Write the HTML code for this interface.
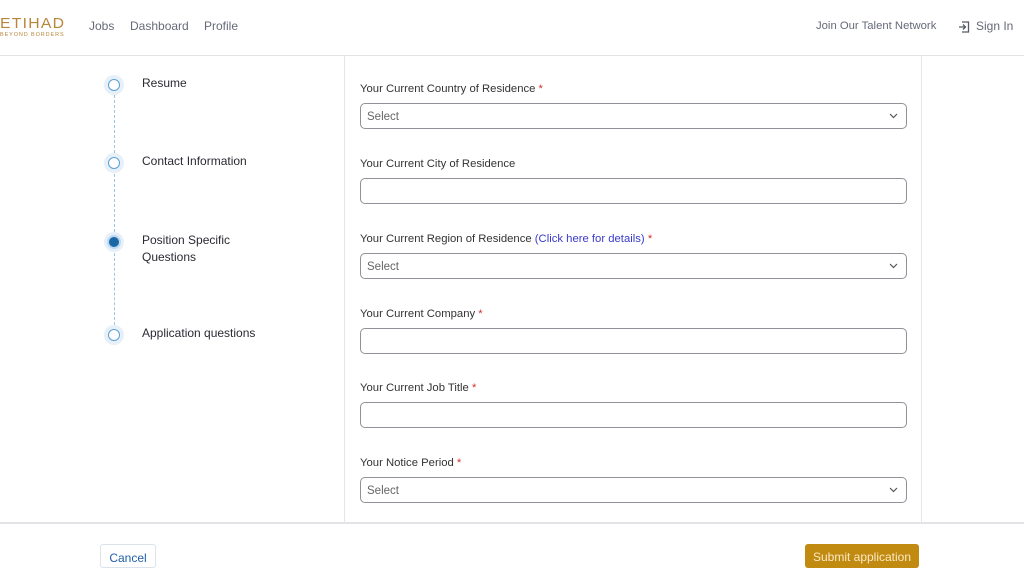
<!DOCTYPE html>
<html><head><meta charset="utf-8"><style>
*{box-sizing:border-box;margin:0;padding:0}
body{width:1024px;height:560px;overflow:hidden;background:#fff;font-family:"Liberation Sans",sans-serif;color:#333;position:relative}
.hdr{position:absolute;left:0;top:0;width:1024px;height:56px;border-bottom:1px solid #e3e3e6}
.a{position:absolute;font-size:12px;color:#666a78}
.logo{position:absolute;left:0;top:16px;color:#b8863b}
.logo b{display:block;font-size:15px;letter-spacing:1.2px;font-weight:normal;line-height:15px;transform:scaleX(1.05);transform-origin:left}
.logo i{display:block;font-style:normal;font-size:5.5px;letter-spacing:0.9px;line-height:8px}
.vl{position:absolute;top:56px;height:467px;width:1px;background:#e6e6ea}
.foot{position:absolute;left:0;top:522px;width:1024px;height:2px;background:#e3e3e8}
.step{position:absolute;left:104px;width:20px;height:20px;border-radius:50%;background:#e7f0f8}
.step::after{content:"";position:absolute;left:4px;top:4px;width:12px;height:12px;border-radius:50%;border:1.5px solid #5aa0d6;background:#fff;box-sizing:border-box}
.step.on::after{background:#1a67a8;border:2px solid #bcd9f0;left:3px;top:3px;width:14px;height:14px}
.dl{position:absolute;left:114px;width:0;border-left:1px dashed #9cc6e8}
.st{position:absolute;left:142px;font-size:12px;color:#2a2a33;line-height:17px}
.lb{position:absolute;left:360px;font-size:11.3px;color:#333;margin-top:2px}
.lb span{color:#d0312d}
.lb a{color:#3a3acb;text-decoration:none}
.in{position:absolute;left:360px;width:547px;height:26px;border:1px solid #8f9299;border-radius:5px;font-size:11.5px;color:#666;padding:7px 6px}
.in svg{position:absolute;right:8px;top:9px}
</style></head><body>
<div class="hdr">
<div class="logo"><b>ETIHAD</b><i>BEYOND BORDERS</i></div>
<div class="a" style="left:89px;top:19px">Jobs</div>
<div class="a" style="left:130px;top:19px">Dashboard</div>
<div class="a" style="left:204px;top:19px">Profile</div>
<div class="a" style="left:816px;top:20px;font-size:11.3px">Join Our Talent Network</div>
<svg style="position:absolute;left:958px;top:21px" width="12" height="12" viewBox="0 0 12 12" fill="none" stroke="#555a66" stroke-width="1.3"><path d="M4 1h6.5v10H4M1 6h6M5 3.5L7.5 6 5 8.5"/></svg>
<div class="a" style="left:976px;top:19px">Sign In</div>
</div>
<div class="vl" style="left:344px"></div>
<div class="vl" style="left:921px"></div>
<div class="foot"></div>

<div class="dl" style="top:95px;height:58px"></div>
<div class="dl" style="top:174px;height:58px"></div>
<div class="dl" style="top:253px;height:72px"></div>
<div class="step" style="top:75px"></div>
<div class="step" style="top:153px"></div>
<div class="step on" style="top:232px"></div>
<div class="step" style="top:325px"></div>
<div class="st" style="top:75px">Resume</div>
<div class="st" style="top:153px">Contact Information</div>
<div class="st" style="top:232px">Position Specific<br>Questions</div>
<div class="st" style="top:325px">Application questions</div>

<div class="lb" style="top:81px">Your Current Country of Residence <span>*</span></div>
<div class="in" style="top:103px">Select<svg width="9" height="6" viewBox="0 0 9 6"><path d="M1 1l3.5 3.5L8 1" stroke="#555" fill="none" stroke-width="1.2"/></svg></div>
<div class="lb" style="top:156px">Your Current City of Residence</div>
<div class="in" style="top:178px"></div>
<div class="lb" style="top:231px">Your Current Region of Residence <a>(Click here for details)</a> <span>*</span></div>
<div class="in" style="top:253px">Select<svg width="9" height="6" viewBox="0 0 9 6"><path d="M1 1l3.5 3.5L8 1" stroke="#555" fill="none" stroke-width="1.2"/></svg></div>
<div class="lb" style="top:306px">Your Current Company <span>*</span></div>
<div class="in" style="top:328px"></div>
<div class="lb" style="top:380px">Your Current Job Title <span>*</span></div>
<div class="in" style="top:402px"></div>
<div class="lb" style="top:455px">Your Notice Period <span>*</span></div>
<div class="in" style="top:477px">Select<svg width="9" height="6" viewBox="0 0 9 6"><path d="M1 1l3.5 3.5L8 1" stroke="#555" fill="none" stroke-width="1.2"/></svg></div>

<div style="position:absolute;left:100px;top:544px;width:56px;height:24px;border:1px solid #dde3ea;border-radius:3px;font-size:12px;color:#1e5fa8;text-align:center;padding-top:6px">Cancel</div>
<div style="position:absolute;left:805px;top:544px;width:114px;height:24px;background:#c18a10;border-radius:3px;font-size:12px;color:#fbe9c4;text-align:center;padding-top:6px">Submit application</div>
</body></html>
